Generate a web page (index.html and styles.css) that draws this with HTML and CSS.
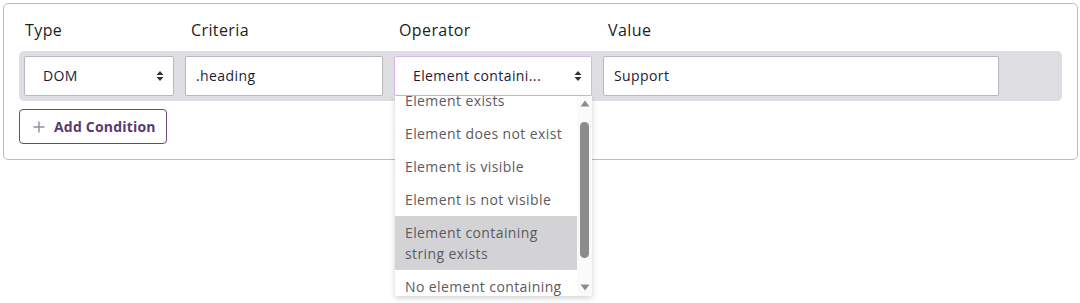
FILE: index.html
```html
<!DOCTYPE html>
<html>
<head>
<meta charset="utf-8">
<link rel="stylesheet" href="styles.css">
</head>
<body>
<div class="card">
  <div class="labels">
    <div class="lbl l-type">Type</div>
    <div class="lbl l-crit">Criteria</div>
    <div class="lbl l-op">Operator</div>
    <div class="lbl">Value</div>
  </div>
  <div class="row">
    <div class="field select w-type"><span>DOM</span><svg class="arr" width="8" height="12" viewBox="0 0 8 12"><path d="M4 1 L7.5 5 H0.5 Z M4 11 L7.5 7 H0.5 Z" fill="#333"/></svg></div>
    <div class="field input w-crit">.heading</div>
    <div class="opwrap w-op">
      <div class="field select focus"><span>Element containi...</span><svg class="arr" width="8" height="12" viewBox="0 0 8 12"><path d="M4 1 L7.5 5 H0.5 Z M4 11 L7.5 7 H0.5 Z" fill="#333"/></svg></div>
      <div class="dropdown">
        <ul class="opts">
          <li>Element exists</li>
          <li>Element does not exist</li>
          <li>Element is visible</li>
          <li>Element is not visible</li>
          <li class="sel">Element containing string exists</li>
          <li>No element containing</li>
        </ul>
        <div class="sbar">
          <svg class="up" width="10" height="7" viewBox="0 0 10 7"><path d="M5 0.5 L9.5 6.5 H0.5 Z" fill="#8c8c8c"/></svg>
          <div class="thumb"></div>
          <svg class="down" width="10" height="7" viewBox="0 0 10 7"><path d="M5 6.5 L9.5 0.5 H0.5 Z" fill="#8c8c8c"/></svg>
        </div>
      </div>
    </div>
    <div class="field input w-val">Support</div>
  </div>
  <button class="add"><svg width="12" height="12" viewBox="0 0 12 12"><path d="M6 0.5 V11.5 M0.5 6 H11.5" stroke="#9b88a5" stroke-width="1.4"/></svg><span>Add Condition</span></button>
</div>
</body>
</html>
```
FILE: styles.css
```css
* { box-sizing: border-box; }
html, body { margin: 0; padding: 0; background: #fff; }
html { height: 303px; }
body {
  padding: 3px;
  min-height: 303px;
  font-family: "Open Sans", "Noto Sans", sans-serif;
  letter-spacing: 0.4px;
}
.card {
  border: 1px solid #bdbbc2;
  border-radius: 5px;
  padding: 15px 15px 15px 15px;
  height: 157px;
  width: 1075px;
}
.labels { display: flex; padding-left: 6px; height: 32px; }
.lbl { font-size: 16px; color: #1d1d1d; line-height: 22px; }
.l-type { width: 166px; flex: none; }
.l-crit { width: 208px; flex: none; }
.l-op { width: 209px; flex: none; }
.w-type { width: 150px; flex: none; }
.w-crit { width: 198px; flex: none; }
.w-op { width: 198px; flex: none; }
.w-val { width: 396px; flex: none; }
.row {
  display: flex; gap: 11px;
  background: #dedde2;
  border-radius: 5px;
  padding: 5px;
  height: 50px;
  width: 1043px;
}
.field {
  height: 40px;
  background: #fff;
  border: 1px solid #b9b7bf;
  border-radius: 2px;
  font-size: 14px;
  color: #1d1b33;
  display: flex; align-items: center;
  padding-bottom: 2px;
}
.input { padding-left: 10px; }
.select { padding-left: 18px; padding-right: 9px; justify-content: space-between; }
.select .arr { margin-top: 2px; }
.focus { border-color: #d9b3f2; }
.opwrap { position: relative; }
.dropdown {
  position: absolute; left: 1px; top: 40px;
  width: 197px; height: 200px;
  background: #fff;
  box-shadow: 0 2px 6px rgba(0,0,0,0.18);
  overflow: hidden;
  z-index: 5;
}
.opts { list-style: none; margin: -12px 15px 0 0; padding: 0; }
.opts li {
  font-size: 14px; line-height: 21px;
  padding: 6px 10px;
  color: #5b5a60;
}
.opts li.sel { background: #d3d3d6; }
.sbar {
  position: absolute; right: 0; top: 0; bottom: 0; width: 15px;
  background: #fafafa;
}
.sbar .up { position: absolute; left: 3px; top: 4px; }
.sbar .down { position: absolute; left: 3px; bottom: 5px; }
.thumb {
  position: absolute; left: 3px; top: 26px; width: 9px; height: 136px;
  background: #8c8c8c; border-radius: 5px;
}
.add {
  margin-top: 8px;
  height: 35px; width: 148px;
  border: 1px solid #6d4680;
  border-radius: 4px;
  background: #fff;
  display: flex; align-items: center; gap: 9px;
  padding: 0 0 1px 13px;
  font-family: "Open Sans", sans-serif;
  font-size: 14px; font-weight: 700;
  letter-spacing: 0.2px;
  color: #5c3a6e;
}
.add svg { margin-top: 1px; }
```
